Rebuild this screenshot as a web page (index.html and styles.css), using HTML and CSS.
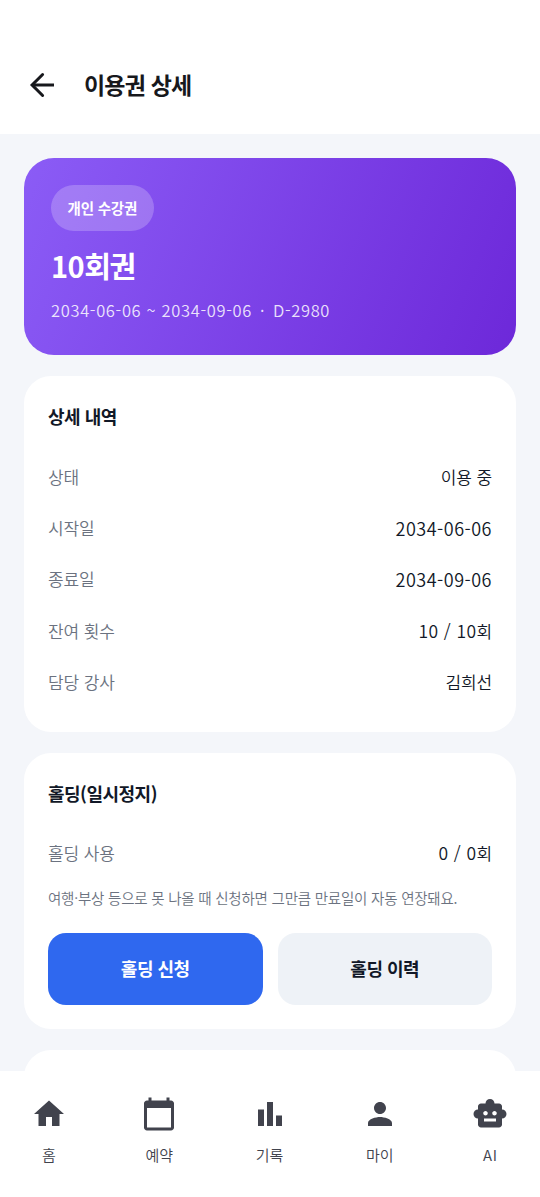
FILE: index.html
```html
<!DOCTYPE html>
<html lang="ko">
<head>
<meta charset="utf-8">
<title>이용권 상세</title>
<link rel="stylesheet" href="styles.css">
</head>
<body>
<div class="app">
  <header class="appbar">
    <svg class="icon back" viewBox="0 0 24 24"><path d="M12.400 5L5.400 12l7 7" stroke-linecap="round"/><path d="M6 12h14"/></svg>
    <h1 class="title">이용권 상세</h1>
  </header>
  <main class="content">
    <section class="pass">
      <span class="badge">개인 수강권</span>
      <h2 class="pass-name"><span class="pass-count">10</span>회권</h2>
      <p class="pass-date"><span>2034-06-06 ~ 2034-09-06</span><span>·</span><span>D-2980</span></p>
    </section>
    <section class="card">
      <h3 class="heading">상세 내역</h3>
      <dl class="rows">
        <div class="row"><dt>상태</dt><dd>이용 중</dd></div>
        <div class="row"><dt>시작일</dt><dd class="num">2034-06-06</dd></div>
        <div class="row"><dt>종료일</dt><dd class="num">2034-09-06</dd></div>
        <div class="row"><dt>잔여 횟수</dt><dd><span class="num count">10 / 10</span>회</dd></div>
        <div class="row"><dt>담당 강사</dt><dd>김희선</dd></div>
      </dl>
    </section>
    <section class="card hold">
      <h3 class="heading">홀딩(일시정지)</h3>
      <dl class="rows">
        <div class="row"><dt>홀딩 사용</dt><dd><span class="num count">0 / 0</span>회</dd></div>
      </dl>
      <p class="note">여행·부상 등으로 못 나올 때 신청하면 그만큼 만료일이 자동 연장돼요.</p>
      <div class="actions">
        <button class="btn primary">홀딩 신청</button>
        <button class="btn">홀딩 이력</button>
      </div>
    </section>
    <section class="card next"></section>
  </main>
  <nav class="tabs">
    <a class="tab"><svg class="icon" viewBox="0 0 24 24"><path d="M10 20v-6h4v6h5v-8h3L12 3 2 12h3v8z"/></svg>홈</a>
    <a class="tab"><svg class="icon" viewBox="0 0 24 24"><path d="M20 3h-1V1h-2v2H7V1H5v2H4c-1.100 0-2 .9-2 2v16c0 1.100.9 2 2 2h16c1.100 0 2-.9 2-2V5c0-1.100-.9-2-2-2zm0 18H4V8h16v13z"/></svg>예약</a>
    <a class="tab"><svg class="icon" viewBox="0 0 24 24"><path d="M4 9h4v11H4zM16 13h4v7h-4zM10 4h4v16h-4z"/></svg>기록</a>
    <a class="tab"><svg class="icon" viewBox="0 0 24 24"><path d="M12 12c2.210 0 4-1.790 4-4s-1.790-4-4-4-4 1.790-4 4 1.790 4 4 4zm0 2c-2.670 0-8 1.340-8 4v2h16v-2c0-2.660-5.330-4-8-4z"/></svg>마이</a>
    <a class="tab"><svg class="icon" viewBox="0 0 24 24"><path d="M20 9V7c0-1.100-.9-2-2-2h-3c0-1.660-1.340-3-3-3S9 3.340 9 5H6c-1.100 0-2 .9-2 2v2c-1.660 0-3 1.340-3 3s1.340 3 3 3v4c0 1.100.9 2 2 2h12c1.100 0 2-.9 2-2v-4c1.660 0 3-1.340 3-3s-1.340-3-3-3zM7.500 11.500c0-.83.67-1.500 1.500-1.500s1.500.67 1.500 1.500S9.830 13 9 13s-1.500-.67-1.500-1.500zM16 17H8v-2h8v2zm-1-4c-.83 0-1.500-.67-1.500-1.500S14.170 10 15 10s1.500.67 1.500 1.500S15.830 13 15 13z"/></svg><span class="latin">AI</span></a>
  </nav>
</div>
</body>
</html>
```
FILE: styles.css
```css
* { box-sizing: border-box; margin: 0; padding: 0; }
body {
  font-family: "Noto Sans CJK KR", "Noto Sans", sans-serif;
  font-weight: 350;
  color: #111827;
  background: #fff;
}
.app { height: 1197px; display: flex; flex-direction: column; overflow: hidden; }
.icon { width: 36px; height: 36px; display: block; fill: currentColor; flex: none; }
.back { fill: none; stroke: currentColor; stroke-width: 2; }
.appbar {
  height: 134px;
  flex: none;
  padding: 67px 24px 0;
  display: flex;
  align-items: flex-start;
  gap: 24px;
  color: #17181c;
}
.title { font-size: 23px; font-weight: 700; line-height: 34px; letter-spacing: -0.8px; }
.content {
  flex: 1;
  min-height: 0;
  overflow: hidden;
  background: #f4f6fa;
  padding: 24px 24px 0;
  display: flex;
  flex-direction: column;
  gap: 21px;
}
.pass {
  height: 197px;
  flex: none;
  border-radius: 30px;
  padding: 27px;
  color: #fff;
  background: linear-gradient(112deg, #8b5cf6, #6d28d9);
  display: flex;
  flex-direction: column;
  align-items: flex-start;
}
.badge {
  height: 46px;
  padding: 0 16.5px;
  border-radius: 23px;
  background: rgba(255, 255, 255, 0.22);
  font-size: 14.5px;
  font-weight: 700;
  line-height: 46px;
  letter-spacing: -0.2px;
}
.pass-name { margin-top: 14px; font-size: 29px; font-weight: 700; line-height: 40px; letter-spacing: -1.4px; }
.pass-count { font-weight: 700; letter-spacing: -0.5px; }
.pass-date {
  margin-top: 13px;
  display: flex;
  gap: 8px;
  font-size: 16.5px;
  line-height: 24px;
  letter-spacing: 0.65px;
  color: rgba(255, 255, 255, 0.85);
  white-space: nowrap;
}
.card {
  height: 356px;
  flex: none;
  padding: 24px;
  border-radius: 27px;
  background: #fff;
}
.hold { height: 276px; }
.next { height: 100px; }
.heading { font-size: 18px; font-weight: 700; line-height: 32px; letter-spacing: -0.5px; }
.rows { margin-top: 19px; }
.row {
  height: 51.2px;
  display: flex;
  align-items: center;
  justify-content: space-between;
  font-size: 17px;
  letter-spacing: -0.1px;
}
.row dt { color: #6b7280; }
.row .num { font-size: 18px; letter-spacing: 0.5px; }
.row .count { font-size: 17.5px; letter-spacing: 0.4px; }
.hold .rows { margin-top: 18px; }
.note { margin-top: 7px; font-size: 14.5px; line-height: 26px; letter-spacing: -0.22px; color: #6b7280; white-space: nowrap; }
.actions { margin-top: 22px; display: flex; gap: 15px; }
.btn {
  flex: 1;
  height: 72px;
  padding-bottom: 2px;
  border: 0;
  border-radius: 18px;
  background: #eef2f7;
  color: #111827;
  font: 700 18px "Noto Sans CJK KR", sans-serif;
  letter-spacing: -0.5px;
}
.primary { background: #2f68ef; color: #fff; }
.tabs {
  height: 126px;
  flex: none;
  padding: 25px 20px 0 19px;
  display: flex;
  justify-content: space-between;
  background: #fff;
  color: #41434d;
}
.tab {
  width: 60px;
  display: flex;
  flex-direction: column;
  align-items: center;
  gap: 12px;
  font-size: 15px;
  line-height: 22px;
}
.latin { letter-spacing: 0.8px; padding-left: 1px; }
```
